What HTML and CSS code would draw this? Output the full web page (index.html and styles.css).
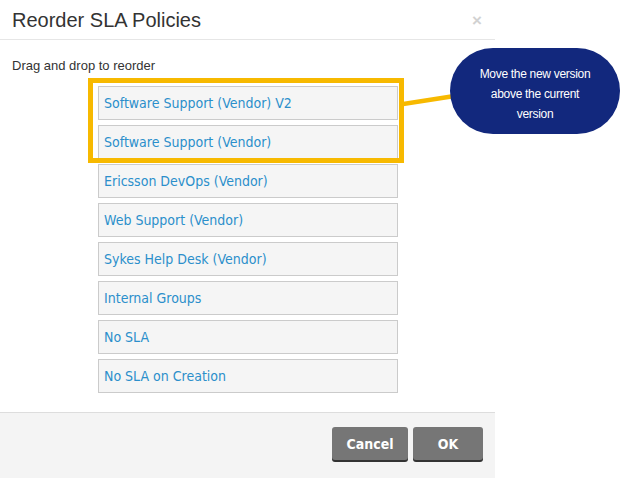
FILE: index.html
```html
<!DOCTYPE html>
<html lang="en">
<head>
  <meta charset="UTF-8" />
  <title>Reorder SLA Policies</title>
  <link rel="stylesheet" href="styles.css">
</head>
<body>
  <div class="page">
    <div class="dialog">
      <div class="dialog-header">
        <h3 class="dialog-title">Reorder SLA Policies</h3>
        <span class="close">&times;</span>
      </div>
      <div class="dialog-body">
        <p class="hint">Drag and drop to reorder</p>
        <ul class="policy-list">
          <li class="policy">Software Support (Vendor) V2</li>
          <li class="policy">Software Support (Vendor)</li>
          <li class="policy">Ericsson DevOps (Vendor)</li>
          <li class="policy">Web Support (Vendor)</li>
          <li class="policy">Sykes Help Desk (Vendor)</li>
          <li class="policy">Internal Groups</li>
          <li class="policy">No SLA</li>
          <li class="policy">No SLA on Creation</li>
        </ul>
      </div>
      <div class="dialog-footer">
        <button class="btn">Cancel</button>
        <button class="btn btn-ok">OK</button>
      </div>
    </div>

    <!-- annotation overlay -->
    <div class="highlight"></div>
    <svg class="connector" width="70" height="30" viewBox="0 0 70 30">
      <line x1="0" y1="24" x2="58" y2="15" stroke="#f7b900" stroke-width="4.5" />
      <circle cx="58" cy="15" r="5.5" fill="#f7b900" />
    </svg>
    <div class="callout">Move the new version above the current version</div>
  </div>
</body>
</html>
```

FILE: styles.css
```css
body {
  margin: 0;
  background: #fff;
  font-family: 'Liberation Sans', Arial, sans-serif;
}
.page {
  position: relative;
  width: 630px;
  height: 478px;
  overflow: hidden;
}
.dialog {
  width: 495px;
  height: 478px;
  display: flex;
  flex-direction: column;
  background: #fff;
}
.dialog-header {
  height: 40px;
  box-sizing: border-box;
  border-bottom: 1px solid #e6e6e6;
  display: flex;
  align-items: center;
  justify-content: space-between;
  padding: 0 13px 0 12px;
}
.dialog-title {
  margin: 0;
  font-size: 20px;
  font-weight: normal;
  color: #333;
  padding-top: 2px;
}
.close {
  font-size: 17px;
  font-weight: bold;
  color: #d2d2d2;
  padding-top: 2px;
}
.dialog-body {
  flex: 1;
  padding: 0 12px;
}
.hint {
  margin: 18px 0 0 0;
  font-size: 13px;
  color: #333;
  line-height: 15px;
}
.policy-list {
  list-style: none;
  margin: 13px 0 0 86px;
  padding: 0;
  display: flex;
  flex-direction: column;
  gap: 5px;
}
.policy {
  width: 300px;
  height: 34px;
  box-sizing: border-box;
  border: 1px solid #cbcbcb;
  background: #f5f5f5;
  display: flex;
  align-items: center;
  padding: 0 0 1px 5px;
  font-family: 'DejaVu Sans Condensed', 'DejaVu Sans', Verdana, sans-serif;
  font-stretch: condensed;
  font-size: 14px;
  color: #2b8fcb;
}
.dialog-footer {
  height: 66px;
  box-sizing: border-box;
  border-top: 1px solid #ddd;
  background: #f4f4f4;
  display: flex;
  justify-content: flex-end;
  align-items: flex-start;
  gap: 5px;
  padding: 14px 12px 0 0;
}
.btn {
  height: 33px;
  border: none;
  border-radius: 3px;
  background: #767676;
  box-shadow: 0 2px 0 #333;
  color: #fff;
  font-family: 'DejaVu Sans Condensed', 'DejaVu Sans', Verdana, sans-serif;
  font-stretch: condensed;
  font-weight: bold;
  font-size: 14px;
  width: 76px;
  padding: 0;
  cursor: pointer;
}
.btn-ok {
  width: 70px;
}
.highlight {
  position: absolute;
  left: 88px;
  top: 78px;
  width: 316px;
  height: 85px;
  box-sizing: border-box;
  border: 5px solid #f7b900;
}
.connector {
  position: absolute;
  left: 403px;
  top: 80px;
}
.callout {
  position: absolute;
  left: 450px;
  top: 48px;
  width: 170px;
  height: 86px;
  box-sizing: border-box;
  border-radius: 43px;
  background: #12287d;
  color: #fff;
  font-size: 12px;
  line-height: 20px;
  letter-spacing: -0.3px;
  text-align: center;
  padding: 16px 26px 0 26px;
}
```
